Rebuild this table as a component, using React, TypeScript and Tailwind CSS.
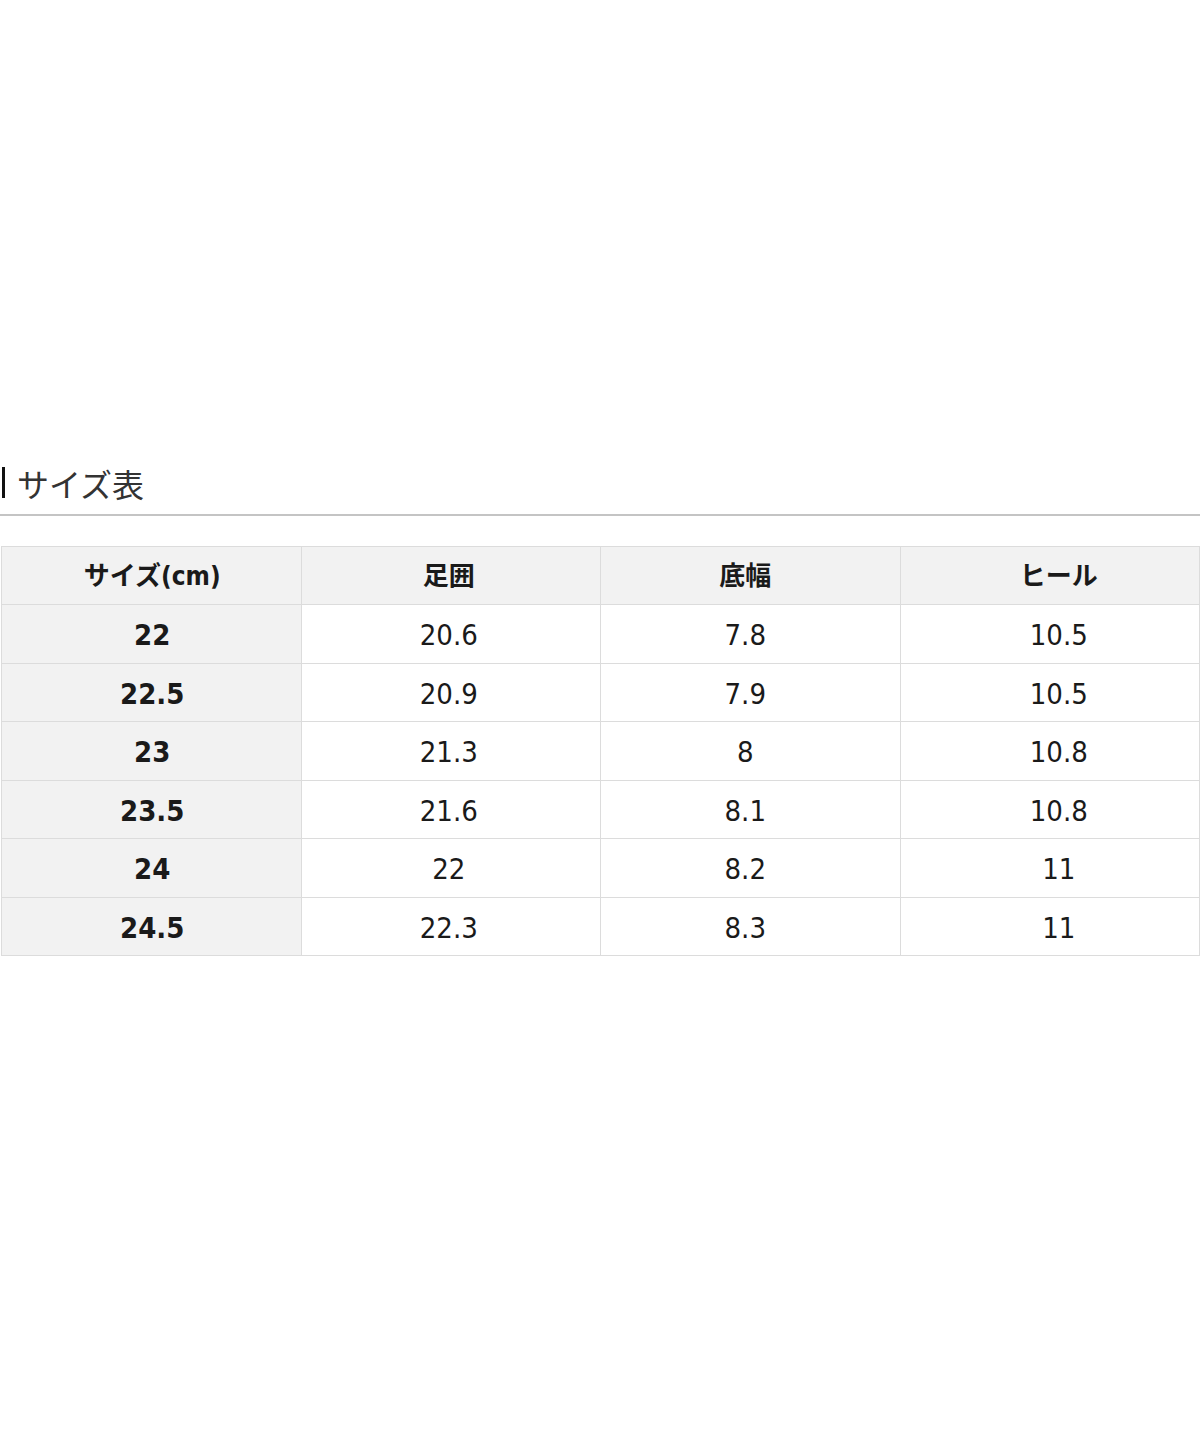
import React from 'react';

const rows: [string, string, string, string][] = [
  ['22', '20.6', '7.8', '10.5'],
  ['22.5', '20.9', '7.9', '10.5'],
  ['23', '21.3', '8', '10.8'],
  ['23.5', '21.6', '8.1', '10.8'],
  ['24', '22', '8.2', '11'],
  ['24.5', '22.3', '8.3', '11'],
];

const headers = ['サイズ(cm)', '足囲', '底幅', 'ヒール'];

// the columns' content sits a little off the cell centres in the original
const colPad = ['pl-[2px]', 'pr-[4px]', 'pr-[10px]', 'pl-[18px]'];

const font = "font-['DejaVu_Sans_Condensed','Noto_Sans_CJK_JP',sans-serif]";

const App: React.FC = () => {
  return (
    <div className={`w-[1200px] h-[1440px] bg-white ${font} text-[#1a1a1a]`}>
      <div className="pt-[465px]">
        {/* Title */}
        <div className="flex items-center h-[35px]">
          <div className="ml-[2px] w-[3px] h-[31px] bg-[#111]" />
          <h2 className="ml-[12px] text-[32px] leading-none font-normal text-[#333] font-['Noto_Sans_CJK_JP',sans-serif]">
            サイズ表
          </h2>
        </div>
        <div className="mt-[14px] h-[2px] bg-[#c4c4c4]" />

        {/* Table */}
        <table className="mt-[30px] w-[1199px] ml-[1px] border-collapse table-fixed">
          <thead>
            <tr className="h-[58px] bg-[#f2f2f2]">
              {headers.map((h, i) => (
                <th
                  key={h}
                  className={`border border-[#dcdcdc] text-[26px] font-bold text-center align-middle py-0 pt-[2px] ${colPad[i]}`}
                >
                  {h}
                </th>
              ))}
            </tr>
          </thead>
          <tbody>
            {rows.map(r => (
              <tr key={r[0]} className="h-[58.5px]">
                {r.map((c, i) => (
                  <td
                    key={i}
                    className={`border border-[#dcdcdc] text-[29px] text-center align-middle py-0 pt-[4px] ${colPad[i]} ${
                      i === 0 ? 'bg-[#f2f2f2] font-bold' : 'bg-white font-normal'
                    }`}
                  >
                    {c}
                  </td>
                ))}
              </tr>
            ))}
          </tbody>
        </table>
      </div>
    </div>
  );
};

export default App;
